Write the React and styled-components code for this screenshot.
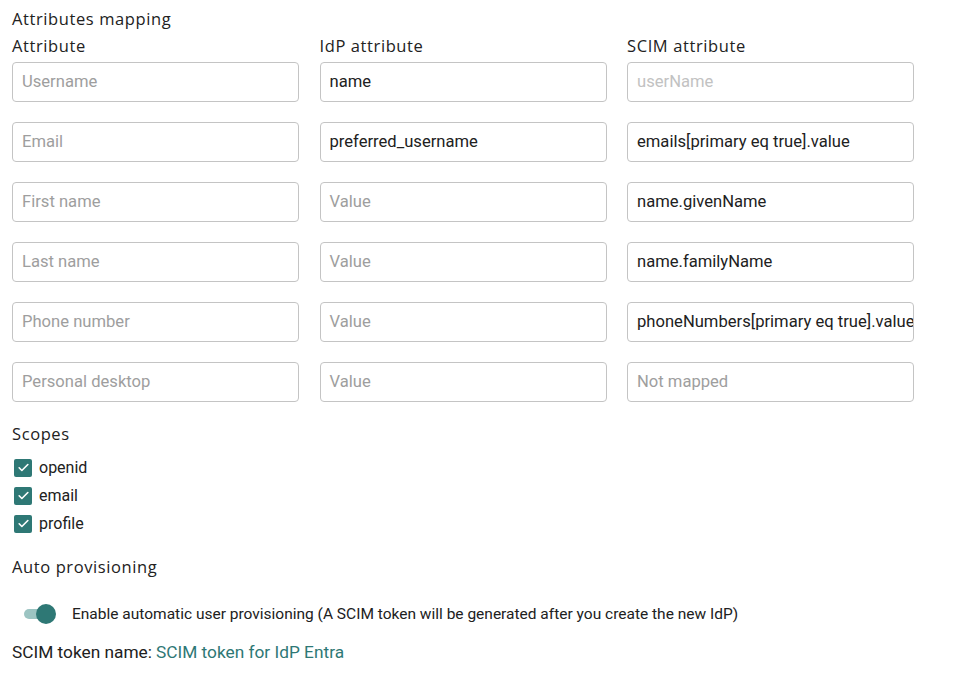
import React from "react";
import styled, { createGlobalStyle } from "styled-components";

const GlobalStyle = createGlobalStyle`
  body {
    margin: 0;
    background: #fff;
    font-family: Roboto, "Liberation Sans", sans-serif;
    color: #212121;
  }
`;

const teal = "#2e7875";

const Page = styled.div`
  width: 960px;
  height: 676px;
  box-sizing: border-box;
  padding: 8px 12px 0;
`;

const Heading = styled.h3`
  margin: 0;
  font-family: "Open Sans", sans-serif;
  font-weight: 500;
  font-size: 16.5px;
  line-height: 22px;
  color: #222;
  letter-spacing: 0.6px;
`;

const Grid = styled.div`
  display: grid;
  grid-template-columns: 287px 287px 287px;
  column-gap: 20.5px;
  row-gap: 20px;
  margin-top: 5px;
`;

const ColLabel = styled(Heading)`
  margin-bottom: -15px;
`;

const Field = styled.div`
  height: 40px;
  box-sizing: border-box;
  border: 1px solid #c4c4c4;
  border-radius: 4px;
  padding: 0 9px 2px;
  display: flex;
  align-items: center;
  font-size: 16.6px;
  white-space: nowrap;
  overflow: hidden;
  color: ${(p) => (p.$placeholder ? (p.$faint ? "#c2c2c2" : "#9e9e9e") : "#212121")};
`;

const Section = styled.div`
  margin-top: ${(p) => p.$top}px;
`;

const ScopeList = styled.div`
  display: flex;
  flex-direction: column;
  gap: 9px;
  margin-top: 13px;
`;

const ScopeRow = styled.label`
  display: flex;
  align-items: center;
  gap: 7px;
  padding-left: 2px;
  font-size: 16px;
  line-height: 19px;
`;

const Box = styled.span`
  width: 18px;
  height: 18px;
  border-radius: 2px;
  background: ${teal};
  display: flex;
  align-items: center;
  justify-content: center;
`;

const ToggleRow = styled.div`
  display: flex;
  align-items: center;
  gap: 16px;
  margin-top: 26px;
  padding-left: 12px;
  font-size: 15.5px;
`;

const Switch = styled.span`
  position: relative;
  flex: none;
  width: 32px;
  height: 20px;
  display: inline-block;

  &::before {
    content: "";
    position: absolute;
    left: 0;
    top: 5px;
    width: 26px;
    height: 10px;
    border-radius: 5px;
    background: #9cc4c2;
  }

  &::after {
    content: "";
    position: absolute;
    left: 12px;
    top: 0;
    width: 20px;
    height: 20px;
    border-radius: 50%;
    background: ${teal};
  }
`;

const TokenLine = styled.div`
  margin-top: 18px;
  font-size: 17.3px;
  display: flex;
  gap: 4px;
`;

const TokenName = styled.span`
  color: ${teal};
`;

const rows = [
  ["Username", "name", "userName"],
  ["Email", "preferred_username", "emails[primary eq true].value"],
  ["First name", null, "name.givenName"],
  ["Last name", null, "name.familyName"],
  ["Phone number", null, "phoneNumbers[primary eq true].value"],
  ["Personal desktop", null, null],
];

const Check = () => (
  <Box>
    <svg width="13" height="13" viewBox="0 0 24 24" fill="none">
      <path d="M4 12.5l5 5L20 6.5" stroke="#fff" strokeWidth="3" strokeLinecap="round" strokeLinejoin="round" />
    </svg>
  </Box>
);

export default function App() {
  return (
    <Page>
      <GlobalStyle />
      <Heading>Attributes mapping</Heading>
      <Grid>
        <ColLabel>Attribute</ColLabel>
        <ColLabel>IdP attribute</ColLabel>
        <ColLabel>SCIM attribute</ColLabel>
        {rows.map(([attr, idp, scim], i) => (
          <React.Fragment key={attr}>
            <Field $placeholder>{attr}</Field>
            <Field $placeholder={!idp}>{idp || "Value"}</Field>
            <Field $placeholder={i === 0 || !scim} $faint={i === 0}>
              {scim || "Not mapped"}
            </Field>
          </React.Fragment>
        ))}
      </Grid>

      <Section $top={21}>
        <Heading>Scopes</Heading>
        <ScopeList>
          {["openid", "email", "profile"].map((s) => (
            <ScopeRow key={s}>
              <Check />
              {s}
            </ScopeRow>
          ))}
        </ScopeList>
      </Section>

      <Section $top={23}>
        <Heading>Auto provisioning</Heading>
        <ToggleRow>
          <Switch />
          <span>
            Enable automatic user provisioning (A SCIM token will be generated after you create the new IdP)
          </span>
        </ToggleRow>
        <TokenLine>
          <span>SCIM token name:</span>
          <TokenName>SCIM token for IdP Entra</TokenName>
        </TokenLine>
      </Section>
    </Page>
  );
}
